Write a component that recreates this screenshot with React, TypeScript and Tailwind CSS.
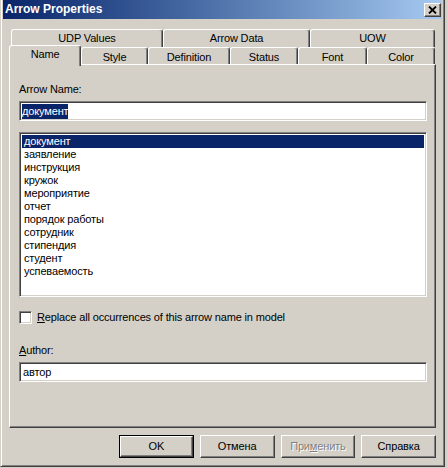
import React from 'react';

const ITEMS = [
  'документ', 'заявление', 'инструкция', 'кружок', 'мероприятие', 'отчет',
  'порядок работы', 'сотрудник', 'стипендия', 'студент', 'успеваемость',
];

const BACK_TABS = [
  { label: 'UDP Values', w: 'w-[152px]' },
  { label: 'Arrow Data', w: 'w-[147px]' },
  { label: 'UOW', w: 'w-[125px]' },
];

const FRONT_TABS = [
  { label: 'Style', w: 'w-[67px]' },
  { label: 'Definition', w: 'w-[82px]' },
  { label: 'Status', w: 'w-[68px]' },
  { label: 'Font', w: 'w-[69px]' },
  { label: 'Color', w: 'w-[68px]' },
];

// classic raised / sunken edges
const raised = 'border-t border-l border-t-white border-l-white border-r border-b border-r-[#404040] border-b-[#404040] shadow-[inset_-1px_-1px_0_#808080]';
const sunken = 'border-t border-l border-t-[#808080] border-l-[#808080] border-r border-b border-r-white border-b-white shadow-[inset_1px_1px_0_#404040,inset_-1px_-1px_0_#d4d0c8]';
const tab = 'flex items-center justify-center border-t border-l border-t-white border-l-white border-r border-r-[#404040] shadow-[inset_-1px_0_0_#808080] rounded-t-[3px] bg-[#d4d0c8]';

const Button: React.FC<{ children: React.ReactNode; isDefault?: boolean; disabled?: boolean }> = ({ children, isDefault, disabled }) => (
  <div className={`w-[75px] h-[23px] ${isDefault ? 'border border-black' : ''}`}>
    <div className={`w-full h-full flex items-center justify-center ${raised} ${disabled ? 'text-[#808080] [text-shadow:1px_1px_0_#fff]' : 'text-black'}`}>
      {children}
    </div>
  </div>
);

export default function App() {
  return (
    <div className="w-[447px] h-[468px] bg-[#d4d0c8] overflow-hidden text-[11px] leading-[13px] tracking-[-0.15px] text-black font-['Liberation_Sans',Arial,sans-serif]">
      <div className="w-[445px] h-[467px] flex flex-col border-l border-l-[#d4d0c8] border-r border-r-[#404040] border-b border-b-[#404040] shadow-[inset_1px_0_0_#fff,inset_-1px_-1px_0_#808080]">
        {/* title bar */}
        <div className="ml-[2px] mr-[2px] h-[19px] flex items-center justify-between pl-[2px] pr-[1px] bg-gradient-to-r from-[#0a246a] to-[#a6caf0]">
          <span className="text-white font-bold text-[12px] tracking-normal">Arrow Properties</span>
          <div className={`w-[17px] h-[14px] mt-[1px] bg-[#d4d0c8] flex items-center justify-center ${raised}`}>
            <svg width="9" height="8" viewBox="0 0 9 8">
              <path d="M1 0.5 L8 7.5 M8 0.5 L1 7.5" stroke="#000" strokeWidth="1.8" />
            </svg>
          </div>
        </div>

        <div className="ml-[8px] w-[427px] mt-[10px]">
          {/* back row of tabs */}
          <div className="flex ml-[2px] h-[18px]">
            {BACK_TABS.map(t => (
              <div key={t.label} className={`${t.w} h-[18px] ${tab}`}>{t.label}</div>
            ))}
          </div>

          {/* front row of tabs */}
          <div className="flex items-end h-[19px] -mt-[2px] relative z-10">
            <div className={`w-[72px] h-[21px] -mb-[2px] pb-[3px] ${tab}`}>Name</div>
            {FRONT_TABS.map(t => (
              <div key={t.label} className={`${t.w} h-[17px] pt-[2px] ${tab}`}>{t.label}</div>
            ))}
          </div>

          {/* tab page */}
          <div className="h-[364px] border-t border-l border-t-white border-l-white border-r border-b border-r-[#404040] border-b-[#404040] shadow-[inset_-1px_-1px_0_#808080] pl-[9px] pt-[18px] flex flex-col">
            <div className="h-[13px]">Arrow Name:</div>
            <div className={`mt-[5px] w-[408px] h-[20px] bg-white flex items-center pl-[2px] ${sunken}`}>
              <span className="bg-[#0a246a] text-white h-[15px] leading-[15px]">документ</span>
            </div>

            <div className={`mt-[11px] w-[408px] h-[165px] bg-white p-[2px] ${sunken}`}>
              {ITEMS.map((it, i) => (
                <div key={it} className={`h-[13px] pl-[2px] ${i === 0 ? 'bg-[#0a246a] text-white' : ''}`}>{it}</div>
              ))}
            </div>

            <div className="mt-[14px] flex items-center h-[13px]">
              <div className={`w-[13px] h-[13px] bg-white ${sunken}`} />
              <span className="ml-[5px]"><span className="underline">R</span>eplace all occurrences of this arrow name in model</span>
            </div>

            <div className="mt-[20px] h-[13px]"><span className="underline">A</span>uthor:</div>
            <div className={`mt-[5px] w-[408px] h-[20px] bg-white flex items-center pl-[3px] ${sunken}`}>
              автор
            </div>
          </div>

          {/* buttons */}
          <div className="flex gap-[6px] ml-[110px] mt-[7px]">
            <Button isDefault>OK</Button>
            <Button>Отмена</Button>
            <Button disabled>При<span className="underline">м</span>енить</Button>
            <Button>Справка</Button>
          </div>
        </div>
      </div>
    </div>
  );
}
